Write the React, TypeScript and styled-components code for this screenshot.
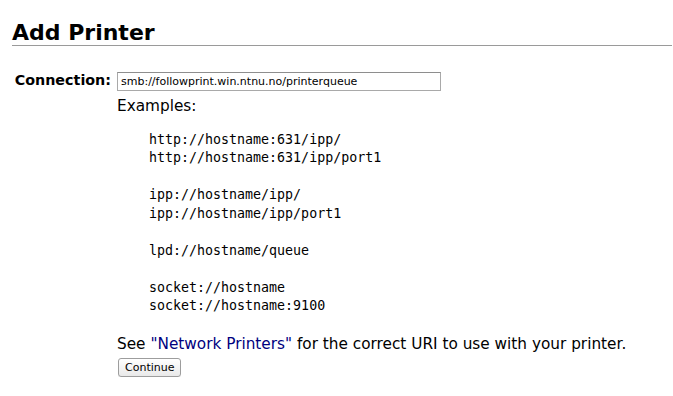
import React from "react";
import styled, { createGlobalStyle } from "styled-components";

const Global = createGlobalStyle`
  html, body { margin: 0; padding: 0; background: #ffffff; }
  body { font-family: "DejaVu Sans", "Liberation Sans", sans-serif; color: #000; }
`;

const Page = styled.div`
  padding: 0 1px 0 12px;
`;

const Title = styled.h2`
  margin: 0;
  padding-top: 20px;
  font-size: 22px;
  line-height: 25px;
  font-weight: bold;
  border-bottom: 1px solid #9a9a9a;
`;

const Form = styled.div`
  display: grid;
  grid-template-columns: 99px 1fr;
  column-gap: 6px;
  margin-top: 24px;
`;

const Label = styled.div`
  font-weight: bold;
  font-size: 14.3px;
  line-height: 18px;
  text-align: right;
  padding-top: 1px;
`;

const UriInput = styled.input`
  box-sizing: border-box;
  width: 324px;
  height: 19px;
  margin: 0;
  padding: 0 3px;
  border: 1px solid #a9a9a9;
  border-top-color: #8e8e8e;
  font-family: "DejaVu Sans", sans-serif;
  font-size: 11px;
  color: #000;
  outline: none;
`;

const Help = styled.div`
  font-size: 15.3px;
  line-height: 18px;
  padding-top: 6px;
`;

const Examples = styled.pre`
  margin: 16px 0 0;
  font-family: "DejaVu Sans Mono", "Liberation Mono", monospace;
  font-size: 13.3px;
  line-height: 18.45px;
`;

const Note = styled.p`
  margin: 19px 0 0;
`;

const HelpLink = styled.a`
  color: #000080;
  text-decoration: none;
`;

const Button = styled.button`
  margin-top: 5px;
  margin-left: 1px;
  height: 19px;
  padding: 0 6px;
  font-family: "DejaVu Sans", sans-serif;
  font-size: 11px;
  color: #000;
  background: linear-gradient(#ffffff, #e9e9e9);
  border: 1px solid #9d9d9d;
  border-radius: 3px;
  box-shadow: 0 1px 0 rgba(0,0,0,0.08);
`;

const EXAMPLES = `    http://hostname:631/ipp/
    http://hostname:631/ipp/port1

    ipp://hostname/ipp/
    ipp://hostname/ipp/port1

    lpd://hostname/queue

    socket://hostname
    socket://hostname:9100`;

export default function App() {
  return (
    <Page>
      <Global />
      <Title>Add Printer</Title>
      <Form>
        <Label>Connection:</Label>
        <div>
          <UriInput defaultValue="smb://followprint.win.ntnu.no/printerqueue" />
          <Help>
            Examples:
            <Examples>{EXAMPLES}</Examples>
            <Note>
              See <HelpLink href="#">"Network Printers"</HelpLink> for the correct URI to use with your printer.
            </Note>
            <Button>Continue</Button>
          </Help>
        </div>
      </Form>
    </Page>
  );
}
